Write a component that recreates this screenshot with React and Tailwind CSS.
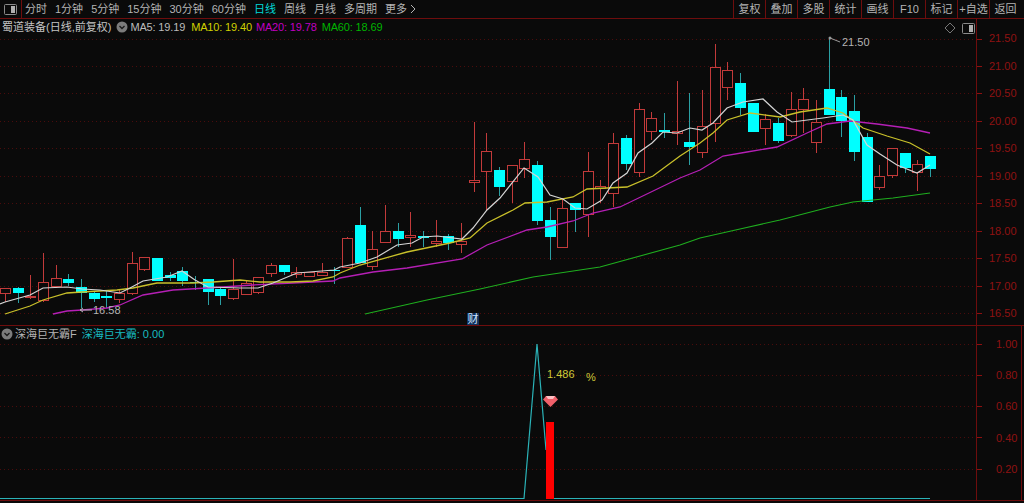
import React from 'react';

const font = { fontFamily: '"Liberation Sans", "Noto Sans CJK SC", sans-serif' };

const periods = ['分时', '1分钟', '5分钟', '15分钟', '30分钟', '60分钟', '日线', '周线', '月线', '多周期'];
const tools = ['复权', '叠加', '多股', '统计', '画线', 'F10', '标记', '+自选'];

const upperAxis = ['21.50', '21.00', '20.50', '20.00', '19.50', '19.00', '18.50', '18.00', '17.50', '17.00', '16.50'];
const lowerAxis = ['1.00', '0.80', '0.60', '0.40', '0.20'];
const upperGrid = [39, 66, 93, 121, 148, 176, 203, 231, 258, 286, 313];
const lowerGrid = [344, 375, 406, 437, 469];

// c = 阴线(青), r = 阳线(红): [type, wickTop, bodyTop, bodyBottom, wickBottom]
const candles = [
  ['r', 288, 288, 293, 302], ['c', 287, 288, 293, 303], ['r', 275, 296, 297, 299], ['r', 253, 282, 300, 302],
  ['r', 265, 278, 286, 288], ['c', 274, 279, 283, 286], ['c', 279, 287, 293, 308], ['c', 291, 293, 299, 302],
  ['c', 290, 296, 298, 308], ['r', 290, 293, 299, 303], ['r', 252, 263, 293, 295], ['r', 257, 257, 269, 271],
  ['c', 258, 258, 281, 281], ['c', 272, 275, 278, 281], ['c', 267, 271, 281, 286], ['c', 276, 282, 283, 290],
  ['c', 279, 279, 292, 305], ['c', 287, 289, 296, 305], ['r', 259, 289, 298, 300], ['r', 280, 283, 294, 295],
  ['r', 277, 277, 292, 294], ['r', 263, 265, 273, 277], ['c', 265, 265, 272, 275], ['r', 267, 272, 274, 278],
  ['r', 272, 272, 276, 277], ['r', 263, 272, 275, 275], ['c', 267, 270, 271, 284], ['r', 237, 238, 267, 267],
  ['c', 207, 225, 263, 263], ['r', 231, 249, 266, 270], ['r', 205, 231, 242, 242], ['c', 223, 231, 239, 247],
  ['r', 212, 235, 237, 247], ['c', 231, 236, 238, 247], ['r', 220, 241, 243, 247], ['c', 234, 236, 243, 250],
  ['r', 223, 241, 244, 253], ['r', 122, 180, 182, 192], ['r', 133, 151, 171, 210], ['c', 167, 170, 187, 196],
  ['r', 165, 165, 181, 203], ['r', 142, 159, 168, 178], ['c', 161, 165, 221, 225], ['c', 207, 220, 237, 260],
  ['r', 198, 208, 247, 247], ['c', 203, 203, 210, 232], ['r', 152, 171, 214, 237], ['r', 180, 186, 188, 203],
  ['r', 133, 143, 193, 207], ['c', 135, 138, 164, 170], ['r', 103, 109, 172, 177], ['r', 112, 118, 131, 140],
  ['c', 113, 130, 132, 138], ['r', 81, 131, 133, 145], ['c', 93, 142, 147, 165], ['r', 90, 126, 152, 158],
  ['r', 44, 67, 123, 142], ['r', 62, 70, 87, 100], ['c', 73, 83, 108, 115], ['c', 103, 103, 132, 132],
  ['r', 114, 119, 128, 145], ['c', 118, 123, 141, 143], ['r', 92, 109, 135, 137], ['r', 88, 99, 109, 133],
  ['r', 100, 122, 142, 153], ['c', 38, 89, 115, 115], ['c', 90, 97, 121, 137], ['c', 95, 111, 152, 161],
  ['c', 133, 137, 202, 202], ['r', 165, 176, 187, 190], ['r', 148, 148, 175, 178], ['c', 153, 153, 168, 173],
  ['r', 160, 164, 172, 191], ['c', 156, 156, 169, 177],
];

const ma5 = '0,304 5,302 30,295 43,288 67,287 82,289 100,290 120,293 130,288 143,281 167,277 182,271 195,280 208,287 240,288 258,288 273,283 297,273 334,270 340,267 360,263 377,257 397,245 412,243 423,237 437,236 462,239 473,228 487,210 500,198 524,168 538,177 550,195 563,199 575,208 587,209 602,200 613,183 627,173 638,153 652,143 663,132 677,133 690,128 702,130 713,123 727,108 743,102 763,99 777,112 792,122 823,118 843,115 853,120 867,145 880,154 897,165 917,173 930,165';
const ma10 = '5,314 30,306 43,300 67,293 82,292 117,290 133,288 157,283 193,283 213,282 240,280 260,282 290,282 313,281 333,277 340,273 360,265 407,252 450,243 470,238 487,223 513,210 525,203 547,202 573,197 587,189 627,187 653,176 680,156 700,143 713,133 727,120 750,113 780,117 800,112 827,108 843,113 863,128 887,136 910,143 930,154';
const ma20 = '53,314 67,311 82,310 107,308 120,305 143,295 173,290 207,288 253,285 293,283 333,281 340,278 373,272 407,268 462,259 487,245 527,230 547,227 573,221 593,213 620,207 680,178 700,170 723,156 747,152 777,147 807,133 827,124 850,121 877,124 907,128 930,133';
const ma60 = '365,314 427,300 480,289 533,277 600,267 680,245 700,238 740,229 780,220 830,207 853,202 893,198 930,193';

function Candle({ data, index }) {
  const [type, wickTop, bodyTop, bodyBottom, wickBottom] = data;
  const x = Math.round(5 + index * 12.67);
  const isUp = type === 'r';
  const wick = isUp ? '#c23a3a' : '#2b9fa3';
  return (
    <g shapeRendering="crispEdges">
      <line x1={x + 0.5} x2={x + 0.5} y1={wickTop} y2={wickBottom} stroke={wick} />
      {isUp ? (
        <rect x={x - 4.5} y={bodyTop + 0.5} width={10} height={Math.max(bodyBottom - bodyTop, 1)} fill="#0a0a0a" stroke="#c23a3a" />
      ) : (
        <rect x={x - 5} y={bodyTop} width={11} height={Math.max(bodyBottom - bodyTop, 1)} fill="#00ffff" />
      )}
    </g>
  );
}

function GridLines({ rows }) {
  return rows.map((y) => (
    <line key={y} x1="0" x2="976" y1={y + 0.5} y2={y + 0.5} stroke="#4a0c0c" strokeDasharray="1 3" shapeRendering="crispEdges" />
  ));
}

function Ticks({ rows, top }) {
  return (
    <svg className="absolute left-0 top-0 w-[6px] h-full">
      {rows.map((y) => (
        <line key={y} x1="0" x2="5" y1={y - top + 0.5} y2={y - top + 0.5} stroke="#8c1010" shapeRendering="crispEdges" />
      ))}
    </svg>
  );
}

function Chevron() {
  return (
    <svg width="12" height="12" viewBox="0 0 12 12" className="shrink-0">
      <circle cx="6" cy="6" r="5.5" fill="#7c7c7c" />
      <path d="M3.5 5 L6 7.5 L8.5 5" fill="none" stroke="#1a1a1a" strokeWidth="1.3" />
    </svg>
  );
}

function TabIcon() {
  return (
    <svg width="13" height="11" viewBox="0 0 13 11">
      <rect x="0.5" y="0.5" width="12" height="10" rx="1" fill="none" stroke="#8a8a8a" />
      <rect x="7" y="2" width="4" height="7" fill="#b0b0b0" />
    </svg>
  );
}

export default function App() {
  return (
    <div className="w-[1024px] h-[503px] bg-[#0a0a0a] flex flex-col overflow-hidden text-[11px] leading-none text-[#b4b4b4]" style={font}>
      {/* 顶部工具栏 */}
      <div className="h-[19px] shrink-0 flex items-center border-b border-[#6e0d0d]">
        <div className="w-[22px] h-full flex items-center justify-center border-r border-[#6e0d0d]">
          <TabIcon />
        </div>
        <div className="flex items-center gap-2 pl-[3px]">
          {periods.map((p) => (
            <span key={p} className={p === '日线' ? 'text-[#00d8d8]' : ''}>{p}</span>
          ))}
          <span className="flex items-center gap-[3px]">
            更多
            <svg width="6" height="10" viewBox="0 0 6 10">
              <path d="M1 1 L5 5 L1 9" fill="none" stroke="#b4b4b4" />
            </svg>
          </span>
        </div>
        <div className="ml-auto flex h-full">
          {tools.map((t) => (
            <div key={t} className="w-8 flex items-center justify-center border-l border-[#6e0d0d]">{t}</div>
          ))}
          <div className="w-[35px] flex items-center justify-center border-l border-[#6e0d0d] pr-[3px]">返回</div>
        </div>
      </div>

      {/* K线主图 */}
      <div className="h-[307px] shrink-0 flex border-b border-[#6e0d0d]">
        <div className="relative w-[976px] h-full">
          <svg width="976" height="306" viewBox="0 19 976 306" className="block">
            <GridLines rows={upperGrid} />
            {candles.map((c, i) => (
              <Candle key={i} data={c} index={i} />
            ))}
            <polyline points={ma60} fill="none" stroke="#1fae1f" strokeWidth="1.1" />
            <polyline points={ma20} fill="none" stroke="#b51fb5" strokeWidth="1.3" />
            <polyline points={ma10} fill="none" stroke="#c9c02a" strokeWidth="1.3" />
            <polyline points={ma5} fill="none" stroke="#d4d4d4" strokeWidth="1.2" />
            <circle cx="830" cy="38" r="1.5" fill="#9a9a9a" />
            <path d="M830 38 L840 42" stroke="#9a9a9a" fill="none" />
            <path d="M80 310 L92 310 M80 310 L83 308 M80 310 L83 312" stroke="#b4b4b4" fill="none" />
          </svg>

          <div className="absolute left-[2px] top-[2px] flex items-center">
            <span className="text-[#c4c4c4]">蜀道装备(日线,前复权)</span>
            <span className="ml-[5px]"><Chevron /></span>
            <span className="ml-[2px] tracking-[-0.15px] text-[#bcbcbc]">MA5: 19.19</span>
            <span className="ml-[6px] tracking-[-0.15px] text-[#d0d000]">MA10: 19.40</span>
            <span className="ml-[4px] tracking-[-0.15px] text-[#c000c0]">MA20: 19.78</span>
            <span className="ml-[5px] tracking-[-0.15px] text-[#00b400]">MA60: 18.69</span>
          </div>

          <svg width="12" height="12" viewBox="0 0 12 12" className="absolute left-[944px] top-[3px]">
            <path d="M6 1 L11 6 L6 11 L1 6 Z" fill="none" stroke="#777" />
          </svg>
          <div className="absolute left-[962px] top-[4px]"><TabIcon /></div>

          <span className="absolute left-[842px] top-[18px]">21.50</span>
          <span className="absolute left-[93px] top-[286px]">16.58</span>
          <span className="absolute left-[467px] top-[294px] w-3 h-3 flex items-center justify-center bg-[#10305a] text-[#cfe4ff]">财</span>
        </div>
        <div className="relative flex-1 border-l border-[#6e0d0d] text-[#8f1212] pt-[6px]">
          <Ticks rows={upperGrid} top={19} />
          {upperAxis.map((v) => (
            <div key={v} className="h-[27.5px] flex items-center pl-[12px]">{v}</div>
          ))}
        </div>
      </div>

      {/* 副图指标 */}
      <div className="h-[175px] shrink-0 flex border-b border-[#6e0d0d]">
        <div className="relative w-[976px] h-full">
          <svg width="976" height="175" viewBox="0 326 976 175" className="block">
            <GridLines rows={lowerGrid} />
            <polyline points="0,498.5 524,498.5 537,344 546,450" fill="none" stroke="#2bb3b8" strokeWidth="1.2" />
            <line x1="554" x2="930" y1="498.5" y2="498.5" stroke="#2bb3b8" strokeWidth="1.2" />
            <rect x="546" y="422" width="8" height="77" fill="#ff0000" />
            <path d="M546 396 L555 396 L558 399.5 L550.5 407 L543 399.5 Z" fill="#f0606a" />
            <path d="M546 396 L555 396 L553 399 L548 399 Z" fill="#ffc0c4" />
          </svg>

          <div className="absolute left-[1px] top-[2px] flex items-center">
            <Chevron />
            <span className="ml-[2px] text-[#b4b4b4]">深海巨无霸F</span>
            <span className="ml-[5px] text-[#18bcc0]">深海巨无霸: 0.00</span>
          </div>
          <span className="absolute left-[547px] top-[43px] text-[#d0c838]">1.486</span>
          <span className="absolute left-[586px] top-[46px] text-[#d0c838]">%</span>
        </div>
        <div className="relative w-[46px] h-full border-x border-[#6e0d0d] text-[#8f1212] pt-[3px]">
          <Ticks rows={lowerGrid} top={326} />
          {lowerAxis.map((v) => (
            <div key={v} className="h-[31.2px] flex items-center pl-[19px]">{v}</div>
          ))}
        </div>
      </div>
    </div>
  );
}
